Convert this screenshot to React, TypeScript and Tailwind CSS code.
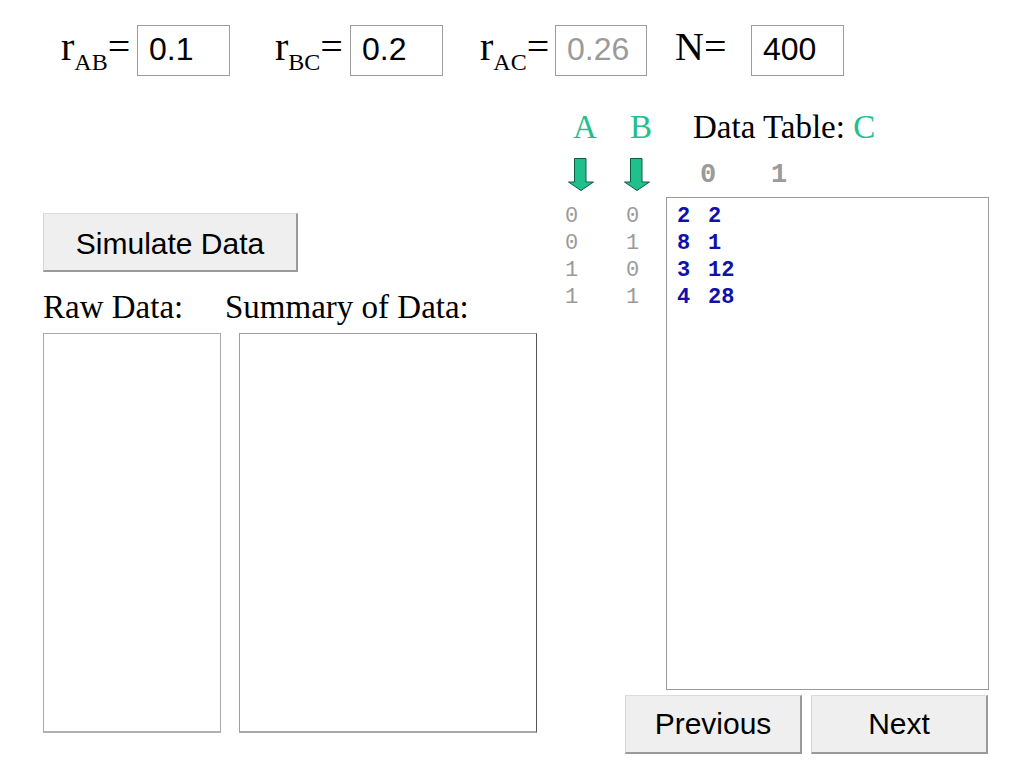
import React from "react";

const serif = "font-['Liberation_Serif','Times_New_Roman',serif]";
const sans = "font-['Liberation_Sans',Arial,sans-serif]";
const mono = "font-['Liberation_Mono','Courier_New',monospace]";

function Arrow() {
  return (
    <svg width="26" height="33" viewBox="0 0 26 33" className="block shrink-0">
      <polygon
        points="6.5,0.5 18,0.5 18,24 25.5,24 13,32.5 0.5,24 6.5,24"
        fill="#20c08c"
        stroke="#0b5e40"
        strokeWidth="1"
        strokeLinejoin="miter"
      />
    </svg>
  );
}

function Btn({ children, className }: { children: React.ReactNode; className: string }) {
  return (
    <div
      className={`flex items-center justify-center bg-[#efefef] border border-t-[#dcdcdc] border-l-[#d4d4d4] border-r-2 border-b-2 border-r-[#9a9a9a] border-b-[#9a9a9a] text-[30px] leading-[34px] text-black ${sans} ${className}`}
    >
      {children}
    </div>
  );
}

export default function App() {
  const labelCls = `mt-[1.5px] text-[40px] leading-[40px] text-black ${serif}`;
  const boxCls = `h-[51px] border border-[#9c9c9c] pl-[11px] text-[32px] leading-[47px] ${sans}`;
  const rows = [
    ["0", "0"],
    ["0", "1"],
    ["1", "0"],
    ["1", "1"],
  ];
  const data = [
    ["2", "2"],
    ["8", "1"],
    ["3", "12"],
    ["4", "28"],
  ];
  return (
    <div className="w-[1024px] h-[768px] bg-white text-black overflow-hidden">
      {/* top row */}
      <div className="flex items-start pt-[25px] pl-[61px]">
        <div className={`${labelCls} w-[76px]`}>
          r<sub className="text-[24px] bottom-[-10px]">AB</sub>=
        </div>
        <div className={`${boxCls} w-[93px] text-black`}>0.1</div>
        <div className={`${labelCls} ml-[45px] w-[75px]`}>
          r<sub className="text-[24px] bottom-[-10px]">BC</sub>=
        </div>
        <div className={`${boxCls} w-[93px] text-black`}>0.2</div>
        <div className={`${labelCls} ml-[37px] w-[75px]`}>
          r<sub className="text-[24px] bottom-[-10px]">AC</sub>=
        </div>
        <div className={`${boxCls} w-[92px] text-[#9a9a9a]`}>0.26</div>
        <div className={`${labelCls} ml-[28px] w-[76px]`}>N=</div>
        <div className={`${boxCls} w-[93px] text-black`}>400</div>
      </div>

      <div className="flex items-start">
        {/* left column */}
        <div className="flex flex-col w-[565px] shrink-0 pl-[43px] pt-[137px]">
          <Btn className="w-[255px] h-[59px] pt-[4px]">Simulate Data</Btn>
          <div className={`flex mt-[19px] text-[33px] leading-[33px] ${serif}`}>
            <span className="w-[182px]">Raw Data:</span>
            <span>Summary of Data:</span>
          </div>
          <div className="flex mt-[9px] gap-[18px]">
            <div className="w-[178px] h-[400px] border border-[#aaaaaa] border-b-2 border-b-[#b0b0b0] bg-white" />
            <div className="w-[298px] h-[400px] border border-[#a0a0a0] border-r-[#555] border-b-2 border-b-[#a8a8a8] bg-white" />
          </div>
        </div>

        {/* right column */}
        <div className="flex flex-col pt-[35px]">
          <div className={`flex items-baseline text-[33px] leading-[33px] ${serif}`}>
            <span className="ml-[8px] w-[57px] text-[#22c08e]">A</span>
            <span className="w-[63px] text-[#22c08e]">B</span>
            <span className="text-black">Data Table:&nbsp;</span>
            <span className="text-[#22c08e]">C</span>
          </div>
          <div className="flex items-start mt-[14px] h-[33px]">
            <div className="ml-[3px]">
              <Arrow />
            </div>
            <div className="ml-[30px]">
              <Arrow />
            </div>
            <div className={`flex ml-[50px] text-[27px] leading-[34px] font-bold text-[#9a9a9a] ${mono}`}>
              <span className="w-[71px]">0</span>
              <span>1</span>
            </div>
          </div>
          <div className="flex items-start mt-[6px]">
            <div className={`w-[101px] pt-[5.5px] text-[22px] leading-[27.3px] text-[#9a9a9a] ${mono}`}>
              {rows.map((r, i) => (
                <div key={i} className="flex">
                  <span className="w-[61px]">{r[0]}</span>
                  <span>{r[1]}</span>
                </div>
              ))}
            </div>
            <div
              className={`w-[323px] h-[493px] border border-[#9a9a9a] pt-[4.5px] pl-[10px] text-[22px] leading-[27.3px] font-bold text-[#1010aa] ${mono}`}
            >
              {data.map((r, i) => (
                <div key={i} className="flex">
                  <span className="w-[31px]">{r[0]}</span>
                  <span>{r[1]}</span>
                </div>
              ))}
            </div>
          </div>
          <div className="flex mt-[5px] ml-[60px] gap-[9px]">
            <Btn className="w-[177px] h-[59px]">Previous</Btn>
            <Btn className="w-[177px] h-[59px]">Next</Btn>
          </div>
        </div>
      </div>
    </div>
  );
}
